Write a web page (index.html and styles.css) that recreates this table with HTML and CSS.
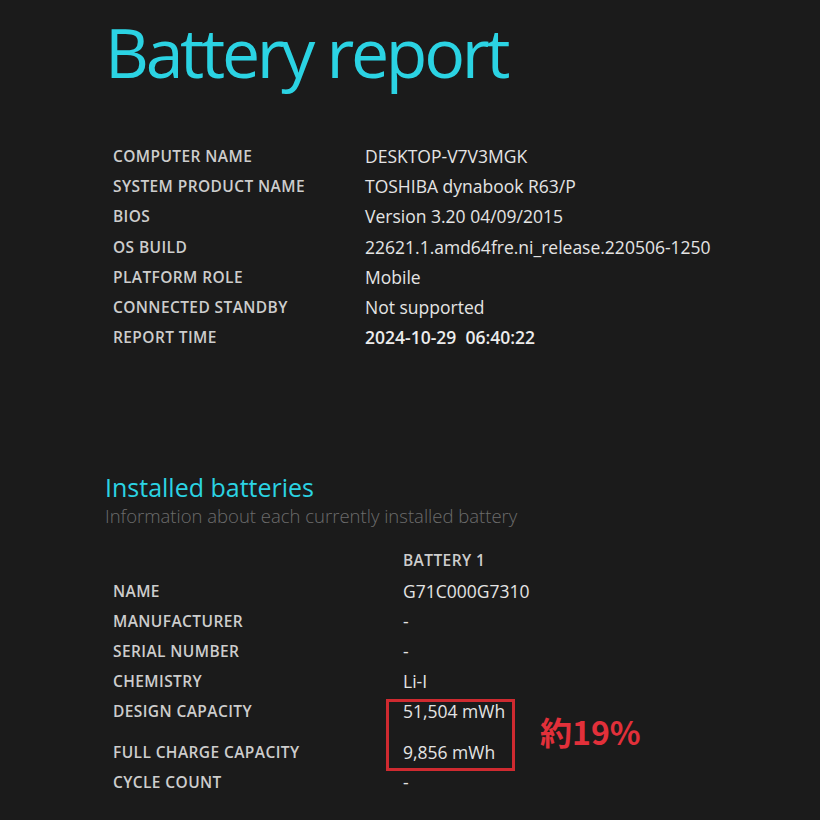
FILE: index.html
```html
<!DOCTYPE html>
<html>
<head>
<meta charset="utf-8">
<link rel="stylesheet" href="styles.css">
</head>
<body>
<main class="page">
  <h1 class="title">Battery report</h1>
  <table class="info">
    <tr><td class="label">COMPUTER NAME</td><td class="value">DESKTOP-V7V3MGK</td></tr>
    <tr><td class="label">SYSTEM PRODUCT NAME</td><td class="value">TOSHIBA dynabook R63/P</td></tr>
    <tr><td class="label">BIOS</td><td class="value">Version 3.20 04/09/2015</td></tr>
    <tr><td class="label">OS BUILD</td><td class="value">22621.1.amd64fre.ni_release.220506-1250</td></tr>
    <tr><td class="label">PLATFORM ROLE</td><td class="value">Mobile</td></tr>
    <tr><td class="label">CONNECTED STANDBY</td><td class="value">Not supported</td></tr>
    <tr><td class="label">REPORT TIME</td><td class="value strong">2024-10-29&nbsp;&nbsp;06:40:22</td></tr>
  </table>

  <h2 class="section">Installed batteries</h2>
  <p class="subtitle">Information about each currently installed battery</p>

  <table class="info batteries">
    <tr><td class="label"></td><td class="label head">BATTERY 1</td></tr>
    <tr><td class="label">NAME</td><td class="value">G71C000G7310</td></tr>
    <tr><td class="label">MANUFACTURER</td><td class="value">-</td></tr>
    <tr><td class="label">SERIAL NUMBER</td><td class="value">-</td></tr>
    <tr><td class="label">CHEMISTRY</td><td class="value">Li-I</td></tr>
    <tr><td class="label">DESIGN CAPACITY</td><td class="value">51,504 mWh</td></tr>
    <tr class="tall"><td class="label">FULL CHARGE CAPACITY</td><td class="value">9,856 mWh</td></tr>
    <tr><td class="label">CYCLE COUNT</td><td class="value">-</td></tr>
  </table>
  <div class="highlight"></div>
  <div class="note">約19%</div>
</main>
</body>
</html>
```

FILE: styles.css
```css
html, body {
  margin: 0;
  padding: 0;
  background: #1b1b1b;
}
body {
  font-family: "Open Sans", "Noto Sans", sans-serif;
  color: #e2e2e2;
}
.page {
  position: relative;
  padding: 0 0 0 105px;
  width: 715px;
  height: 820px;
  overflow: hidden;
}
.title {
  margin: 0;
  padding-top: 12px;
  font-weight: 400;
  font-size: 68px;
  line-height: 80px;
  color: #2bd3e3;
  letter-spacing: -3.3px;
}
.info {
  border-collapse: collapse;
  margin-top: 49px;
  margin-left: 8px;
}
.info td {
  padding: 0;
  height: 30.2px;
  vertical-align: middle;
  white-space: nowrap;
}
.label {
  width: 252px;
  font-size: 15.5px;
  font-weight: 600;
  letter-spacing: 0.4px;
  color: #cdcdcd;
}
.value {
  font-size: 17.5px;
  font-weight: 400;
  color: #e4e4e4;
}
.value.strong {
  font-weight: 600;
  color: #ececec;
}
.section {
  margin: 120px 0 0 0;
  font-size: 25px;
  font-weight: 500;
  line-height: 30px;
  color: #2bd3e3;
}
.subtitle {
  margin: 0;
  font-size: 18.5px;
  font-weight: 300;
  line-height: 28px;
  color: #6c6c6c;
}
.batteries {
  margin-top: 15px;
}
.batteries .label {
  width: 290px;
}
.batteries .head {
  width: auto;
}
.batteries tr.tall td {
  padding-top: 10px;
}
.highlight {
  position: absolute;
  left: 386px;
  top: 699px;
  width: 123px;
  height: 66px;
  border: 3px solid #cf2a30;
}
.note {
  position: absolute;
  left: 540px;
  top: 711px;
  font-size: 32px;
  font-weight: 700;
  line-height: 40px;
  color: #e2303a;
  font-family: "Noto Sans CJK JP", "Open Sans", sans-serif;
}
```
